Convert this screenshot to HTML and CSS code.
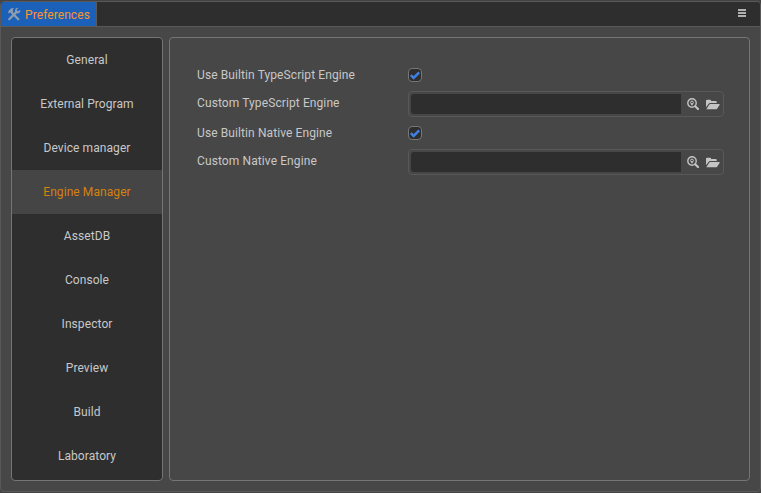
FILE: index.html
```
<!DOCTYPE html>
<html lang="en">
<head>
<meta charset="utf-8">
<title>Preferences</title>
<link rel="stylesheet" href="styles.css">
</head>
<body>
<svg class="defs" aria-hidden="true">
  <symbol id="search" viewBox="0 0 12 12"><circle cx="5" cy="5" r="4.2" fill="none" stroke="currentColor" stroke-width="1.4"/><path d="M8.2 8.2 11 11" stroke="currentColor" stroke-width="2.1" stroke-linecap="round"/><circle cx="5" cy="4.5" r="1.4" fill="none" stroke="currentColor" stroke-width="1"/><path d="M4.2 5.6h1.6v1.7H4.2z" fill="currentColor"/></symbol>
  <symbol id="folder" viewBox="0 0 14 11"><path d="M0 8.2V1.7Q0 .7 1 .7h3.2q.9 0 .9 1v.4h4.6q1 0 1 1v1H4.2q-1 0-1.7.8zM.5 10 3 6q.6-1 1.6-1h8.5q1 0 .5.9l-2.3 3.5q-.6.9-1.6.9H1Q.1 10.3.5 10z" fill="currentColor"/></symbol>
</svg>
<div class="window">
  <header class="tabbar">
    <div class="tab">
      <svg class="tools" viewBox="0 0 14 14"><path d="M4.3 5 11.3 12.2" stroke="currentColor" stroke-width="2.3" stroke-linecap="round"/><path d="M1 5.6 2 3.2 4.4 1.3 7.2 1 5.8 2.5 6.1 4 4.2 6 3.2 5.1 2 6.5z" fill="currentColor"/><path d="M2.2 12.2 9.8 4.6" stroke="currentColor" stroke-width="2.2" stroke-linecap="round"/><path d="M11.3.9 9.8 2.6l.2 1.5 1.5.2L13.2 2.7Q13.8 5.5 11.5 6.3 9.4 6.7 8.1 5.1 7.6 2.7 8.8 1.6 9.8.7 11.3.9z" fill="currentColor"/></svg>
      <span class="title">Preferences</span>
    </div>
    <div class="menu"><i></i><i></i><i></i></div>
  </header>
  <div class="content">
    <nav class="sidebar">
      <div class="item">General</div>
      <div class="item">External Program</div>
      <div class="item">Device manager</div>
      <div class="item active">Engine Manager</div>
      <div class="item">AssetDB</div>
      <div class="item">Console</div>
      <div class="item">Inspector</div>
      <div class="item">Preview</div>
      <div class="item">Build</div>
      <div class="item">Laboratory</div>
    </nav>
    <main class="panel">
      <div class="row"><span class="label">Use Builtin TypeScript Engine</span><span class="check"><svg viewBox="0 0 12 12"><path d="M1.8 6.2 4.6 8.9 10.2 3.3"/></svg></span></div>
      <div class="row path"><span class="label">Custom TypeScript Engine</span><div class="field"><div class="input"></div><svg class="search"><use href="#search"/></svg><svg class="folder"><use href="#folder"/></svg></div></div>
      <div class="row"><span class="label">Use Builtin Native Engine</span><span class="check"><svg viewBox="0 0 12 12"><path d="M1.8 6.2 4.6 8.9 10.2 3.3"/></svg></span></div>
      <div class="row path"><span class="label">Custom Native Engine</span><div class="field"><div class="input"></div><svg class="search"><use href="#search"/></svg><svg class="folder"><use href="#folder"/></svg></div></div>
    </main>
  </div>
</div>
</body>
</html>
```
FILE: styles.css
```
* { box-sizing: border-box; }
body {
  margin: 0;
  height: 493px;
  padding: 1px 0;
  overflow: hidden;
  background: #434343;
  color: #c8c8c8;
  font: 12px/16px Roboto, "Liberation Sans", sans-serif;
  letter-spacing: 0.08px;
}
svg { display: block; flex: none; }
.defs { display: none; }
.window {
  height: 491px;
  border: 1px solid #595959;
  border-radius: 4px;
  background: #474747;
  overflow: hidden;
}
.tabbar {
  height: 25px;
  display: flex;
  justify-content: space-between;
  background: #2e2e2e;
  border-bottom: 1px solid #595959;
}
.tab {
  width: 96px;
  display: flex;
  align-items: center;
  padding-left: 6px;
  gap: 4px;
  background: #1b61b9;
  border-right: 1px solid #595959;
  color: #fd942b;
  white-space: nowrap;
}
.title { padding-top: 1px; }
.tools { width: 14px; height: 14px; color: #8e9cad; }
.menu {
  width: 8px;
  margin: 7px 14px 0 0;
  display: flex;
  flex-direction: column;
  gap: 1px;
}
.menu i { height: 2px; background: #b0b0b0; }
.content { display: flex; gap: 6px; padding: 10px; }
.sidebar {
  width: 152px;
  height: 444px;
  border: 1px solid #757575;
  border-radius: 4px;
  background: #2e2e2e;
}
.item { height: 44px; line-height: 44px; text-align: center; }
.active { background: #454545; color: #d5820f; }
.panel {
  width: 581px;
  height: 444px;
  padding: 22px 25px 0 27px;
  border: 1px solid #757575;
  border-radius: 4px;
}
.row { display: flex; align-items: center; height: 30px; }
.path { height: 28px; }
.label { width: 211px; letter-spacing: 0.1px; }
.path .label { padding-bottom: 2px; }
.check {
  width: 14px;
  height: 14px;
  border: 1px solid #777;
  border-radius: 4px;
  background: #2e2e2e;
}
.check path { fill: none; stroke: #3f7fe0; stroke-width: 2.5; }
.field {
  width: 316px;
  height: 26px;
  display: flex;
  align-items: center;
  border: 1px solid #595959;
  border-radius: 4px;
  padding-left: 2px;
}
.input { width: 270px; height: 20px; background: #2e2e2e; border-radius: 3px 0 0 3px; }
.search { width: 12px; height: 12px; margin-left: 6px; color: #c4c4c4; }
.folder { width: 14px; height: 11px; margin-left: 7px; color: #c4c4c4; }
```
